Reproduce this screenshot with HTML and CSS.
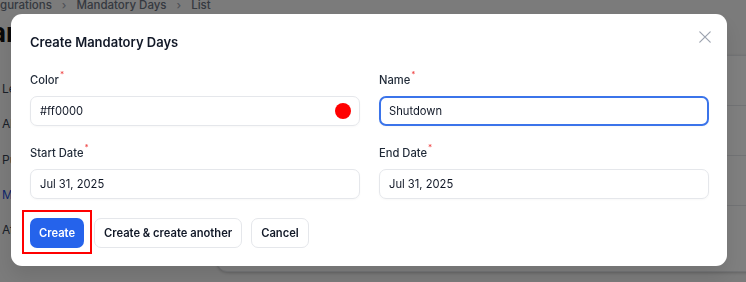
FILE: index.html
```html
<!DOCTYPE html>
<html lang="en">
<head>
    <meta charset="UTF-8">
    <title>Mandatory Days - List</title>
    <link rel="stylesheet" href="styles.css">
</head>
<body>
    <div class="page">
        <nav class="breadcrumb">
            <span>gurations</span>
            <span class="sep">&rsaquo;</span>
            <span>Mandatory Days</span>
            <span class="sep">&rsaquo;</span>
            <span>List</span>
        </nav>
        <h1 class="page-title">ar</h1>

        <div class="layout">
            <ul class="side-nav">
                <li>Leave Types</li>
                <li>Allowances</li>
                <li>Public Holidays</li>
                <li class="active">Mandatory Days</li>
                <li>Attendance</li>
            </ul>
            <div class="table-card">
                <div class="table-row"></div>
                <div class="table-row"></div>
                <div class="table-row"></div>
            </div>
        </div>
    </div>

    <div class="overlay">
        <div class="modal">
            <div class="modal-header">
                <h2>Create Mandatory Days</h2>
                <button class="close-btn" aria-label="Close">
                    <svg width="12" height="12" viewBox="0 0 12 12" fill="none" stroke="#9ca3af" stroke-width="1.2" stroke-linecap="round">
                        <path d="M0.8 0.8 L11.2 11.2 M11.2 0.8 L0.8 11.2"/>
                    </svg>
                </button>
            </div>

            <form class="modal-form">
                <div class="field">
                    <label>Color<sup>*</sup></label>
                    <div class="input">
                        <span>#ff0000</span>
                        <span class="swatch"></span>
                    </div>
                </div>
                <div class="field">
                    <label>Name<sup>*</sup></label>
                    <div class="input focused"><span>Shutdown</span></div>
                </div>
                <div class="field">
                    <label>Start Date<sup>*</sup></label>
                    <div class="input"><span>Jul 31, 2025</span></div>
                </div>
                <div class="field">
                    <label>End Date<sup>*</sup></label>
                    <div class="input"><span>Jul 31, 2025</span></div>
                </div>
            </form>

            <div class="modal-actions">
                <span class="highlight">
                    <button class="btn btn-primary">Create</button>
                </span>
                <button class="btn btn-outline">Create &amp; create another</button>
                <button class="btn btn-outline">Cancel</button>
            </div>
        </div>
    </div>
</body>
</html>
```

FILE: styles.css
```css
body {
    margin: 0;
    width: 746px;
    height: 282px;
    overflow: hidden;
    background: #f6f6f6;
    font-family: 'Inter', 'Noto Sans', sans-serif;
    color: #111827;
}

/* background page */

.page {
    position: relative;
}

.breadcrumb {
    display: flex;
    gap: 10px;
    margin-top: -1px;
    font-size: 11.5px;
    line-height: 12px;
    color: #6b7280;
    font-weight: 500;
}

.breadcrumb .sep {
    color: #9ca3af;
}

.page-title {
    margin: 7px 0 0 -9px;
    font-size: 26px;
    line-height: 30px;
    font-weight: 700;
    color: #111;
}

.layout {
    display: flex;
    margin-top: 4px;
}

.side-nav {
    list-style: none;
    margin: 29px 0 0;
    padding: 0 0 0 2px;
    width: 215px;
}

.side-nav li {
    height: 35.25px;
    font-size: 12px;
    line-height: 16px;
    color: #374151;
}

.side-nav li.active {
    color: #1d4ed8;
}

.table-card {
    flex: 1;
    height: 215px;
    margin-top: 3px;
    margin-right: -20px;
    background: #fff;
    border: 1px solid #e5e7eb;
    border-radius: 10px;
    box-shadow: 0 1px 3px rgba(0, 0, 0, 0.2);
}

.table-row {
    height: 49px;
    border-bottom: 1px solid #e5e7eb;
}

/* modal */

.overlay {
    position: fixed;
    inset: 0;
    background: rgba(0, 0, 0, 0.5);
    padding: 14px 0 0 11px;
}

.modal {
    width: 716px;
    box-sizing: border-box;
    padding: 20px 18px 18px 19px;
    background: #fff;
    border-radius: 11px;
    box-shadow: 0 10px 20px rgba(0, 0, 0, 0.1);
}

.modal-header {
    display: flex;
    justify-content: space-between;
    align-items: center;
    height: 16px;
}

.modal-header h2 {
    margin: 0;
    font-size: 13px;
    line-height: 16px;
    font-weight: 600;
    color: #111827;
}

.close-btn {
    border: none;
    background: none;
    padding: 0;
    margin: -10px -2px 0 0;
    width: 12px;
    height: 12px;
    display: flex;
}

.modal-form {
    display: grid;
    grid-template-columns: 1fr 1fr;
    column-gap: 19px;
    row-gap: 19px;
    margin-top: 22px;
}

.field label {
    display: block;
    font-size: 11.2px;
    line-height: 16px;
    font-weight: 500;
    color: #1f2937;
    margin-bottom: 8px;
}

.field sup {
    color: #ef4444;
    font-size: 8px;
    line-height: 0;
    margin-left: 1px;
    vertical-align: 7px;
}

.input {
    height: 30px;
    box-sizing: border-box;
    display: flex;
    align-items: center;
    justify-content: space-between;
    padding: 0 8px 0 9px;
    border: 1px solid #e5e7eb;
    border-radius: 7px;
    font-size: 11.2px;
    color: #111827;
    box-shadow: 0 1px 2px rgba(0, 0, 0, 0.03);
}

.input.focused {
    border: 2px solid #3b74ea;
    padding-left: 8px;
}

.swatch {
    width: 16px;
    height: 16px;
    border-radius: 50%;
    background: #ff0000;
}

.modal-actions {
    display: flex;
    gap: 9px;
    margin-top: 19px;
}

.highlight {
    position: relative;
    display: flex;
    margin-right: 1px;
}

.highlight::after {
    content: "";
    position: absolute;
    top: -8px;
    left: -8px;
    right: -8px;
    bottom: -6px;
    border: 2px solid #ff0000;
}

.btn {
    height: 30px;
    padding: 0 9px;
    border-radius: 7px;
    font-family: inherit;
    font-size: 11.2px;
    font-weight: 600;
    cursor: pointer;
}

.btn-primary {
    background: #2563eb;
    color: #fff;
    border: none;
    width: 54px;
}

.btn-outline {
    background: #fff;
    color: #111827;
    border: 1px solid #e5e7eb;
}
```
